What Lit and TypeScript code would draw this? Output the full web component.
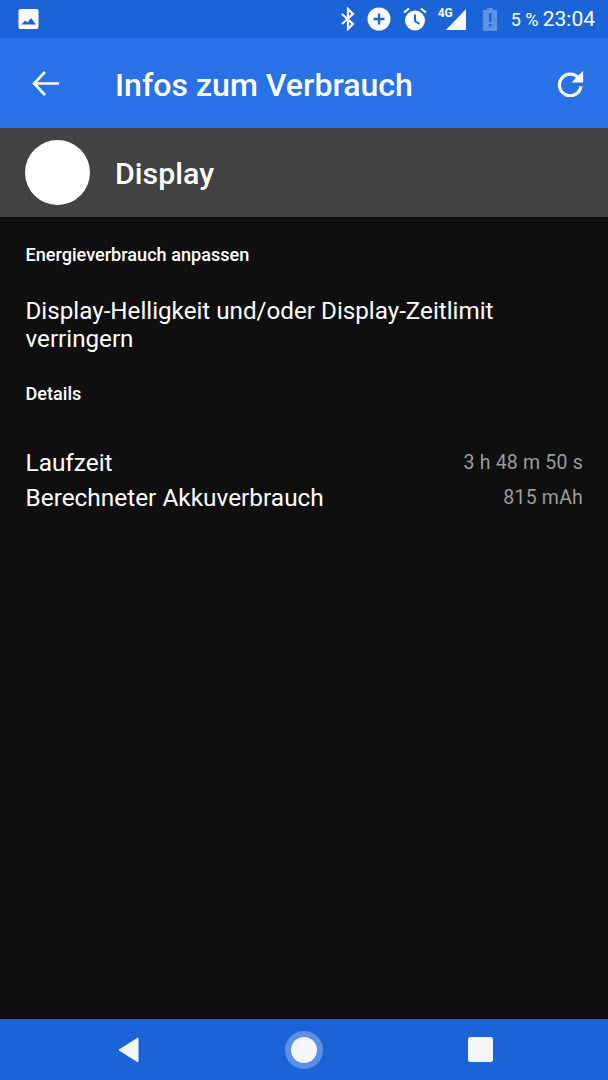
import { LitElement, html, css } from "lit";
import { customElement } from "lit/decorators.js";

@customElement("app-root")
export class AppRoot extends LitElement {
  static styles = css`
    :host {
      display: flex;
      flex-direction: column;
      width: 608px;
      height: 1080px;
      background: #0f0f0f;
      font-family: Roboto, "Noto Sans", sans-serif;
      color: #fff;
      overflow: hidden;
    }
    * { box-sizing: border-box; }
    svg { display: block; flex: none; }
    .status {
      height: 38px;
      background: #1a64d8;
      display: flex;
      align-items: center;
      padding: 0 13px 0 18px;
      flex: none;
    }
    .spacer { flex: 1; }
    .status-right { display: flex; align-items: center; }
    .bt { margin-left: 0; }
    .plus { margin-left: 11px; }
    .alarm { margin-left: 12px; }
    .sig { position: relative; width: 32px; height: 26px; margin-left: 8px; }
    .sig-text { position: absolute; left: 3px; top: 0; font-size: 12px; font-weight: 700; line-height: 14px; }
    .sig-tri { position: absolute; left: 11px; top: 3px; }
    .batt { margin-left: 15px; }
    .pct { font-size: 18px; margin-left: 13px; width: 32px; white-space: nowrap; }
    .time { font-size: 21px; margin-left: 0; }
    .bar {
      height: 90px;
      background: #2871e6;
      display: flex;
      align-items: center;
      padding: 0 24px 0 31px;
      flex: none;
    }
    .title { font-size: 32.1px; font-weight: 500; margin-left: 55px; flex: 1; padding-top: 3px; }
    .head {
      height: 89px;
      background: #424242;
      display: flex;
      align-items: center;
      padding: 0 0 0 25px;
      flex: none;
    }
    .circle { width: 65px; height: 65px; border-radius: 50%; background: #fff; }
    .head-title { font-size: 30.4px; font-weight: 500; margin-left: 25px; padding-top: 1px; }
    .main { flex: 1; padding: 0 25px 0 25.5px; display: flex; flex-direction: column; }
    .section { font-size: 18.1px; font-weight: 500; line-height: 20px; }
    .s1 { margin-top: 28px; }
    .tip { font-size: 24.2px; line-height: 28px; margin-top: 32px; }
    .s2 { margin-top: 31px; }
    .rows { margin-top: 44px; display: flex; flex-direction: column; gap: 6px; }
    .row { display: flex; justify-content: space-between; align-items: center; height: 29px; }
    .label { font-size: 24.4px; }
    .value { font-size: 19.5px; color: #9c9c9c; letter-spacing: 0.2px; }
    .nav {
      height: 61px;
      background: #1a64d8;
      flex: none;
      display: flex;
      align-items: center;
      justify-content: space-between;
      padding: 0 115px 0 118px;
    }
  `;

  render() {
    return html`
      <div class="status">
        <svg width="22" height="22" viewBox="0 0 22 22">
          <rect x="0.5" y="1" width="20" height="20" rx="2" fill="#fff"></rect>
          <path d="M3.5 16.5 L7 12.5 L9.5 14.5 L13 10 L18 16.5 Z" fill="#1a64d8"></path>
        </svg>
        <div class="spacer"></div>
        <div class="status-right">
          <svg class="bt" width="16" height="24" viewBox="0 0 16 24" fill="none" stroke="#fff" stroke-width="2.2">
            <path d="M2 7 L13 17 L8 22 V2 L13 7 L2 17"></path>
          </svg>
          <svg class="plus" width="24" height="24" viewBox="0 0 24 24">
            <circle cx="12" cy="12" r="11.5" fill="#fff"></circle>
            <path d="M12 6.5 V17.5 M6.5 12 H17.5" stroke="#1a64d8" stroke-width="2.4"></path>
          </svg>
          <svg class="alarm" width="24" height="26" viewBox="0 0 24 26">
            <circle cx="12" cy="14.5" r="10" fill="#fff"></circle>
            <path d="M12 8.5 V15 L16.5 18" fill="none" stroke="#1a64d8" stroke-width="2"></path>
            <path d="M1 6.5 L6 2.5 M23 6.5 L18 2.5" stroke="#fff" stroke-width="2.2"></path>
          </svg>
          <div class="sig">
            <span class="sig-text">4G</span>
            <svg class="sig-tri" width="20" height="21" viewBox="0 0 20 21">
              <path d="M0 21 L20 0 V21 Z" fill="#fff"></path>
            </svg>
          </div>
          <svg class="batt" width="16" height="24" viewBox="0 0 16 24">
            <path d="M1 3 H5 V1 H11 V3 H15 V24 H1 Z" fill="#fff" fill-opacity="0.3"></path>
            <path d="M7 6 H9.5 V15 H7 Z M7 17 H9.5 V19.5 H7 Z" fill="#1a64d8"></path>
          </svg>
          <span class="pct">5 %</span>
          <span class="time">23:04</span>
        </div>
      </div>
      <div class="bar">
        <svg width="29" height="27" viewBox="0 0 29 27" fill="none" stroke="#fff" stroke-width="2.6">
          <path d="M3 13.5 H28 M14 2 L3 13.5 L14 25"></path>
        </svg>
        <div class="title">Infos zum Verbrauch</div>
        <svg width="27" height="27" viewBox="0 0 30 30" fill="none">
          <path d="M24 9 A12 12 0 1 0 26.6 18" stroke="#fff" stroke-width="3.6"></path>
          <path d="M29 1 V14 H16 Z" fill="#fff"></path>
        </svg>
      </div>
      <div class="head">
        <div class="circle"></div>
        <div class="head-title">Display</div>
      </div>
      <div class="main">
        <div class="section s1">Energieverbrauch anpassen</div>
        <div class="tip">Display-Helligkeit und/oder Display-Zeitlimit verringern</div>
        <div class="section s2">Details</div>
        <div class="rows">
          <div class="row"><span class="label">Laufzeit</span><span class="value">3 h 48 m 50 s</span></div>
          <div class="row"><span class="label">Berechneter Akkuverbrauch</span><span class="value">815 mAh</span></div>
        </div>
      </div>
      <div class="nav">
        <svg width="22" height="26" viewBox="0 0 22 26">
          <path d="M1 13 L20 1 V25 Z" fill="#f4f6fb" stroke="#f4f6fb" stroke-width="1" stroke-linejoin="round"></path>
        </svg>
        <svg width="38" height="38" viewBox="0 0 38 38">
          <circle cx="19" cy="19" r="19" fill="#5c90e6"></circle>
          <circle cx="19" cy="19" r="13" fill="#f4f6fb"></circle>
        </svg>
        <svg width="25" height="25" viewBox="0 0 25 25">
          <rect width="25" height="25" rx="2.5" fill="#f4f6fb"></rect>
        </svg>
      </div>
    `;
  }
}
